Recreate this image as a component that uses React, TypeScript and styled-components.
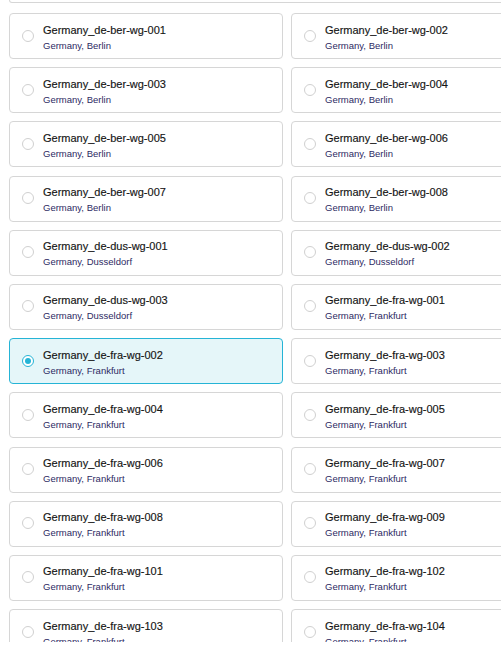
import styled, { createGlobalStyle } from "styled-components";
import { useState } from "react";

const GlobalStyle = createGlobalStyle`
  html, body {
    margin: 0;
    padding: 0;
    background: #ffffff;
    overflow: hidden;
  }
  body {
    font-family: "Liberation Sans", Arial, sans-serif;
  }
`;

type Region = { id: string; city: string };

const regions: Region[] = [
  { id: "Germany_de-ber-wg-001", city: "Berlin" },
  { id: "Germany_de-ber-wg-002", city: "Berlin" },
  { id: "Germany_de-ber-wg-003", city: "Berlin" },
  { id: "Germany_de-ber-wg-004", city: "Berlin" },
  { id: "Germany_de-ber-wg-005", city: "Berlin" },
  { id: "Germany_de-ber-wg-006", city: "Berlin" },
  { id: "Germany_de-ber-wg-007", city: "Berlin" },
  { id: "Germany_de-ber-wg-008", city: "Berlin" },
  { id: "Germany_de-dus-wg-001", city: "Dusseldorf" },
  { id: "Germany_de-dus-wg-002", city: "Dusseldorf" },
  { id: "Germany_de-dus-wg-003", city: "Dusseldorf" },
  { id: "Germany_de-fra-wg-001", city: "Frankfurt" },
  { id: "Germany_de-fra-wg-002", city: "Frankfurt" },
  { id: "Germany_de-fra-wg-003", city: "Frankfurt" },
  { id: "Germany_de-fra-wg-004", city: "Frankfurt" },
  { id: "Germany_de-fra-wg-005", city: "Frankfurt" },
  { id: "Germany_de-fra-wg-006", city: "Frankfurt" },
  { id: "Germany_de-fra-wg-007", city: "Frankfurt" },
  { id: "Germany_de-fra-wg-008", city: "Frankfurt" },
  { id: "Germany_de-fra-wg-009", city: "Frankfurt" },
  { id: "Germany_de-fra-wg-101", city: "Frankfurt" },
  { id: "Germany_de-fra-wg-102", city: "Frankfurt" },
  { id: "Germany_de-fra-wg-103", city: "Frankfurt" },
  { id: "Germany_de-fra-wg-104", city: "Frankfurt" },
];

export default function App() {
  const [selected, setSelected] = useState("Germany_de-fra-wg-002");

  return (
    <>
      <GlobalStyle />
      <Viewport>
        <TopEdge />
        <Grid>
          {regions.map((r) => (
            <Option
              key={r.id}
              $active={selected === r.id}
              onClick={() => setSelected(r.id)}
            >
              <Radio $active={selected === r.id} />
              <Labels>
                <Name>{r.id}</Name>
                <Location>Germany, {r.city}</Location>
              </Labels>
            </Option>
          ))}
        </Grid>
      </Viewport>
    </>
  );
}

const Viewport = styled.div`
  height: 642px;
  overflow: hidden;
  padding: 0 0 0 9px;
  width: 600px;
`;

/* bottom edge of the row scrolled above the list */
const TopEdge = styled.div`
  height: 2px;
  border: 1px solid #d6d6d6;
  border-top: none;
  border-radius: 0 0 4px 4px;
  margin-bottom: 10px;
`;

const Grid = styled.div`
  display: grid;
  grid-template-columns: 274px 274px;
  column-gap: 8px;
  row-gap: 8.2px;
`;

const Option = styled.div<{ $active: boolean }>`
  box-sizing: border-box;
  height: 46px;
  display: flex;
  align-items: center;
  gap: 9px;
  padding: 0 12px;
  border: 1px solid ${(p) => (p.$active ? "#25b4d6" : "#d6d6d6")};
  border-radius: 4px;
  background: ${(p) => (p.$active ? "#e5f6f9" : "#ffffff")};
  cursor: pointer;
`;

const Radio = styled.span<{ $active: boolean }>`
  flex: none;
  box-sizing: border-box;
  width: 12px;
  height: 12px;
  border-radius: 50%;
  border: 1px solid ${(p) => (p.$active ? "#25b4d6" : "#d0d0d0")};
  background: #ffffff;
  position: relative;
  margin-top: -1px;

  &::after {
    content: "";
    display: ${(p) => (p.$active ? "block" : "none")};
    position: absolute;
    left: 2px;
    top: 2px;
    width: 6px;
    height: 6px;
    border-radius: 50%;
    background: #25b4d6;
  }
`;

const Labels = styled.div`
  display: flex;
  flex-direction: column;
  gap: 1px;
  margin-top: 2px;
`;

const Name = styled.div`
  font-size: 11px;
  line-height: 15px;
  color: #151515;
  white-space: nowrap;
  -webkit-text-stroke: 0.15px #151515;
`;

const Location = styled.div`
  font-size: 9.5px;
  line-height: 13px;
  color: #2d2a63;
  white-space: nowrap;
`;
